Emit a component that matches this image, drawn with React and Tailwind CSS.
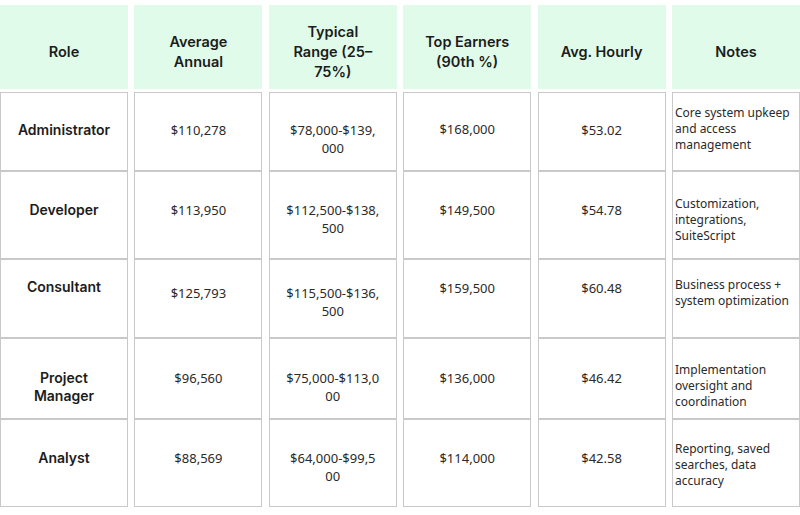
const headers = [
  ['Role'],
  ['Average', 'Annual'],
  ['Typical', 'Range (25–', '75%)'],
  ['Top Earners', '(90th %)'],
  ['Avg. Hourly'],
  ['Notes'],
];

const rows = [
  {
    h: 'h-[79px]',
    pads: ['pt-[28px]', 'pt-[28px]', 'pt-[28px]', 'pt-[27px]', 'pt-[28px]', 'pt-[12px]'],
    cells: [['Administrator'], ['$110,278'], ['$78,000-$139,', '000'], ['$168,000'], ['$53.02'], ['Core system upkeep', 'and access', 'management']],
  },
  {
    h: 'h-[88px]',
    pads: ['pt-[29px]', 'pt-[29px]', 'pt-[29px]', 'pt-[29px]', 'pt-[29px]', 'pt-[24px]'],
    cells: [['Developer'], ['$113,950'], ['$112,500-$138,', '500'], ['$149,500'], ['$54.78'], ['Customization,', 'integrations,', 'SuiteScript']],
  },
  {
    h: 'h-[79px]',
    pads: ['pt-[18px]', 'pt-[24px]', 'pt-[24px]', 'pt-[19px]', 'pt-[19px]', 'pt-[17px]'],
    cells: [['Consultant'], ['$125,793'], ['$115,500-$136,', '500'], ['$159,500'], ['$60.48'], ['Business process +', 'system optimization']],
  },
  {
    h: 'h-[81px]',
    pads: ['pt-[30px]', 'pt-[30px]', 'pt-[30px]', 'pt-[30px]', 'pt-[30px]', 'pt-[23px]'],
    cells: [['Project', 'Manager'], ['$96,560'], ['$75,000-$113,0', '00'], ['$136,000'], ['$46.42'], ['Implementation', 'oversight and', 'coordination']],
  },
  {
    h: 'h-[88px]',
    pads: ['pt-[29px]', 'pt-[29px]', 'pt-[29px]', 'pt-[29px]', 'pt-[29px]', 'pt-[21px]'],
    cells: [['Analyst'], ['$88,569'], ['$64,000-$99,5', '00'], ['$114,000'], ['$42.58'], ['Reporting, saved', 'searches, data', 'accuracy']],
  },
];

function Lines({ lines }) {
  return lines.map((l, i) => <div key={i}>{l}</div>);
}

export default function App() {
  return (
    <div className="h-[515px] w-[800px] overflow-hidden bg-white pt-[5px] text-[#1c1c1c]">
      <div className="grid grid-cols-6 gap-x-[6.4px] font-['Inter',sans-serif] text-[14.5px] font-semibold leading-[20px]">
        {headers.map((h, i) => (
          <div key={i} className="flex h-[84px] flex-col items-center justify-center bg-[#e0fbe9] pt-[10px] text-center">
            <Lines lines={h} />
          </div>
        ))}
      </div>
      <div className="mt-[3px] grid grid-cols-6 gap-x-[6.4px]">
        {rows.map((r, ri) =>
          r.cells.map((c, ci) => {
            const notes = ci === 5;
            const role = ci === 0;
            return (
              <div
                key={ri + '-' + ci}
                className={
                  'border border-[#c9c9c9] ' +
                  r.h +
                  ' ' +
                  r.pads[ci] +
                  (notes
                    ? " px-[2px] font-['Noto_Sans',sans-serif] text-[12px] leading-[16px] text-[#2a2a2a]"
                    : role
                    ? " text-center font-['Inter',sans-serif] text-[14px] font-semibold leading-[18px]"
                    : " text-center font-['Noto_Sans',sans-serif] text-[13px] leading-[18px] text-[#2a2a2a]")
                }
              >
                <Lines lines={c} />
              </div>
            );
          })
        )}
      </div>
    </div>
  );
}
